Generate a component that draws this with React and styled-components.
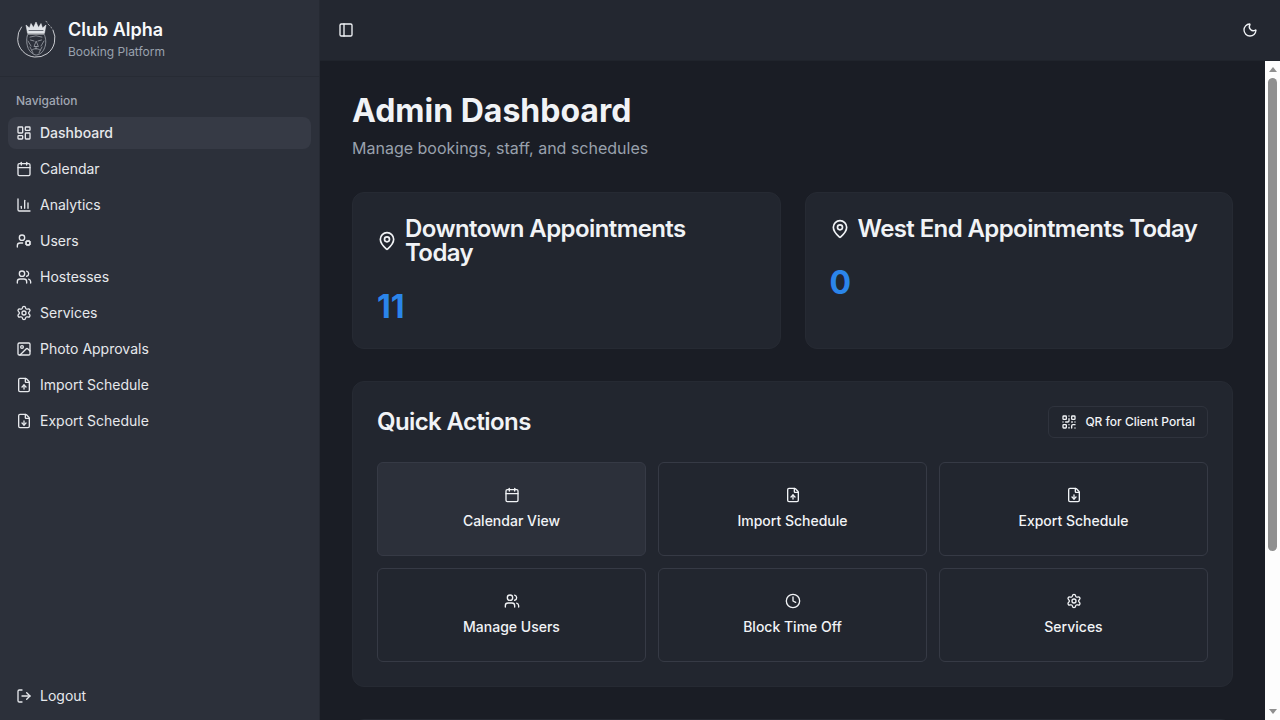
import React from 'react';
import styled, { createGlobalStyle } from 'styled-components';
import {
  LayoutDashboard, Calendar, ChartColumn, UserCog, Users, Settings, Image, FileUp, FileDown,
  LogOut, PanelLeft, Moon, MapPin, QrCode, Clock,
} from 'lucide-react';

const GlobalStyle = createGlobalStyle`
  html, body, #root { height: 100%; }
  body {
    margin: 0;
    background: #1a1d25;
    color: #f8fafc;
    font-family: Inter, "Noto Sans", sans-serif;
  }
  * { box-sizing: border-box; }
`;

const Layout = styled.div`
  display: flex;
  height: 100vh;
  overflow: hidden;
`;
const Sidebar = styled.aside`
  width: 320px;
  flex: none;
  display: flex;
  flex-direction: column;
  background: #2c303a;
  border-right: 1px solid #262a33;
`;
const Brand = styled.div`
  height: 77px;
  padding: 16px;
  display: flex;
  align-items: flex-start;
  gap: 12px;
  border-bottom: 1px solid #272b34;
`;
const BrandLogo = styled.svg`
  width: 40px;
  height: 42px;
  flex: none;
`;
const BrandName = styled.div`
  font-size: 18px;
  line-height: 28px;
  font-weight: 600;
  color: #f8fafc;
`;
const BrandSub = styled.div`
  font-size: 12px;
  line-height: 16px;
  color: #99a1ad;
`;
const Nav = styled.nav`
  flex: 1;
  padding: 16px 8px 8px;
  display: flex;
  flex-direction: column;
`;
const NavLabel = styled.div`
  height: 16px;
  margin: 0 8px 8px;
  font-size: 12px;
  line-height: 16px;
  font-weight: 500;
  color: #a1a7b3;
`;
const NavList = styled.div`
  display: flex;
  flex-direction: column;
  gap: 4px;
`;
const NavItem = styled.a`
  height: 32px;
  padding: 0 8px;
  display: flex;
  align-items: center;
  gap: 8px;
  border-radius: 8px;
  font-size: 14px;
  line-height: 20px;
  font-weight: ${p => (p.$active ? 500 : 400)};
  color: #e6e8ec;
  background: ${p => (p.$active ? '#363a45' : 'transparent')};
  svg { width: 16px; height: 16px; flex: none; }
`;
const SidebarFoot = styled.div`
  padding: 0 8px 8px;
`;
const Column = styled.div`
  flex: 1;
  min-width: 0;
  display: flex;
  flex-direction: column;
`;
const TopBar = styled.header`
  height: 61px;
  flex: none;
  padding: 0 16px 0 12px;
  display: flex;
  align-items: center;
  justify-content: space-between;
  background: #232730;
  border-bottom: 1px solid #20242c;
`;
const IconButton = styled.button`
  width: 28px;
  height: 28px;
  padding: 0;
  display: flex;
  align-items: center;
  justify-content: center;
  background: none;
  border: 0;
  color: #f1f3f6;
  svg { width: 16px; height: 16px; }
`;
const ScrollArea = styled.div`
  flex: 1;
  min-height: 0;
  display: flex;
`;
const Main = styled.main`
  flex: 1;
  min-width: 0;
  overflow: hidden;
  padding: 32px;
  display: flex;
  flex-direction: column;
  gap: 32px;
`;
const ScrollTrack = styled.div`
  width: 15px;
  flex: none;
  padding: 6px 3px;
  display: flex;
  flex-direction: column;
  align-items: center;
  background: #fdfdfd;
`;
const ScrollArrow = styled.div`
  flex: none;
  width: 0;
  height: 0;
  border-left: 4.5px solid transparent;
  border-right: 4.5px solid transparent;
  ${p => (p.$down ? 'border-top: 5px solid #8f8f8f;' : 'border-bottom: 5px solid #8f8f8f;')}
`;
const ScrollThumb = styled.div`
  flex: none;
  width: 9px;
  height: 473px;
  margin-top: 6px;
  margin-bottom: auto;
  border-radius: 5px;
  background: #8f8f8f;
`;
const PageHead = styled.div`
  display: flex;
  flex-direction: column;
  gap: 8px;
  flex: none;
`;
const PageTitle = styled.h1`
  margin: 0;
  font-size: 32px;
  line-height: 35px;
  font-weight: 700;
  color: #f1f3f6;
`;
const PageSub = styled.p`
  margin: 0;
  font-size: 16px;
  line-height: 24px;
  color: #99a1ad;
`;
const StatGrid = styled.div`
  display: grid;
  grid-template-columns: 1fr 1fr;
  gap: 24px;
  flex: none;
`;
const Card = styled.section`
  padding: 24px;
  background: #22262f;
  border: 1px solid #262a33;
  border-radius: 12px;
  flex: none;
`;
const StatTitle = styled.h3`
  margin: 0 0 24px;
  display: flex;
  align-items: center;
  gap: 8px;
  font-size: 24px;
  line-height: 24px;
  font-weight: 600;
  letter-spacing: -0.6px;
  color: #f1f3f6;
  svg { width: 20px; height: 20px; flex: none; }
`;
const StatValue = styled.div`
  font-size: 32px;
  line-height: 35px;
  font-weight: 700;
  color: #2b85ea;
`;
const ActionsHead = styled.div`
  height: 32px;
  margin-bottom: 24px;
  display: flex;
  align-items: center;
  justify-content: space-between;
`;
const ActionsTitle = styled.h2`
  margin: 0;
  font-size: 24px;
  line-height: 32px;
  font-weight: 600;
  letter-spacing: -0.6px;
  color: #f1f3f6;
`;
const OutlineButton = styled.button`
  height: 32px;
  padding: 0 12px;
  display: flex;
  align-items: center;
  gap: 8px;
  background: #22262f;
  border: 1px solid #2f333d;
  border-radius: 6px;
  font-family: inherit;
  font-size: 12px;
  line-height: 16px;
  font-weight: 500;
  color: #f1f3f6;
  svg { width: 16px; height: 16px; }
`;
const ActionGrid = styled.div`
  display: grid;
  grid-template-columns: repeat(3, 1fr);
  gap: 12px;
`;
const ActionTile = styled.button`
  height: 94px;
  padding: 0;
  display: flex;
  flex-direction: column;
  align-items: center;
  justify-content: center;
  gap: 8px;
  background: ${p => (p.$hover ? '#2c303a' : '#22262f')};
  border: 1px solid #363a45;
  border-radius: 6px;
  font-family: inherit;
  font-size: 14px;
  line-height: 20px;
  font-weight: 500;
  color: #f1f3f6;
  svg { width: 16px; height: 16px; }
`;
const MoreCard = styled(Card)`
  height: 180px;
`;

const navItems = [
  { label: 'Dashboard', icon: LayoutDashboard, active: true },
  { label: 'Calendar', icon: Calendar },
  { label: 'Analytics', icon: ChartColumn },
  { label: 'Users', icon: UserCog },
  { label: 'Hostesses', icon: Users },
  { label: 'Services', icon: Settings },
  { label: 'Photo Approvals', icon: Image },
  { label: 'Import Schedule', icon: FileUp },
  { label: 'Export Schedule', icon: FileDown },
];

const actions = [
  { label: 'Calendar View', icon: Calendar, hover: true },
  { label: 'Import Schedule', icon: FileUp },
  { label: 'Export Schedule', icon: FileDown },
  { label: 'Manage Users', icon: Users },
  { label: 'Block Time Off', icon: Clock },
  { label: 'Services', icon: Settings },
];

// rough line drawing of the lion head with crown
const Logo = () => (
  <BrandLogo viewBox="0 0 40 42" fill="none" stroke="#f1f3f6" strokeLinecap="round">
    <path d="M5.5 11 A18.7 18.7 0 1 0 37 14" strokeWidth="0.8" />
    <path d="M11.5 17 L10 9 L13.5 12 L15 7.5 L17.5 11.5 L20 6 L22.5 11.5 L25 7.5 L26.5 12 L30 9 L28.5 17 Z" fill="#dfe2e7" strokeWidth="0.5" />
    <path d="M13 14.5 H27" strokeWidth="0.7" stroke="#3a3e49" />
    <path d="M12 18 H28" strokeWidth="0.9" />
    <path d="M11.5 19 Q9.5 26 12.5 33 Q16 38.5 20 39 Q26 38.5 28.5 32 Q31 26 28.5 19" strokeWidth="0.7" stroke="#b9bdc6" strokeDasharray="2 0.8" />
    <path d="M14 21 Q20 18.5 26 21 M14.5 24 L18 25 M25.5 24 L22 25 M20 25.5 L18 30.5 H22 Z M16 34 Q20 31 24 34 M12 25 L15 30 M28 25 L25 30 M14 31 L17 37 M26 31 L23 37 M20 30.5 V33" strokeWidth="0.6" stroke="#c4c8cf" />
    <path d="M32 8 L33.5 9.5 M35 11 L35.5 12 M30 5.5 L31 6" strokeWidth="0.6" />
  </BrandLogo>
);

const App = () => (
  <Layout>
    <GlobalStyle />
    <Sidebar>
      <Brand>
        <Logo />
        <div>
          <BrandName>Club Alpha</BrandName>
          <BrandSub>Booking Platform</BrandSub>
        </div>
      </Brand>
      <Nav>
        <NavLabel>Navigation</NavLabel>
        <NavList>
          {navItems.map(({ label, icon: Icon, active }) => (
            <NavItem key={label} $active={active}><Icon />{label}</NavItem>
          ))}
        </NavList>
      </Nav>
      <SidebarFoot>
        <NavItem><LogOut />Logout</NavItem>
      </SidebarFoot>
    </Sidebar>
    <Column>
      <TopBar>
        <IconButton><PanelLeft /></IconButton>
        <IconButton><Moon /></IconButton>
      </TopBar>
      <ScrollArea>
        <Main>
          <PageHead>
            <PageTitle>Admin Dashboard</PageTitle>
            <PageSub>Manage bookings, staff, and schedules</PageSub>
          </PageHead>
          <StatGrid>
            <Card>
              <StatTitle><MapPin />Downtown Appointments Today</StatTitle>
              <StatValue>11</StatValue>
            </Card>
            <Card>
              <StatTitle><MapPin />West End Appointments Today</StatTitle>
              <StatValue>0</StatValue>
            </Card>
          </StatGrid>
          <Card>
            <ActionsHead>
              <ActionsTitle>Quick Actions</ActionsTitle>
              <OutlineButton><QrCode />QR for Client Portal</OutlineButton>
            </ActionsHead>
            <ActionGrid>
              {actions.map(({ label, icon: Icon, hover }) => (
                <ActionTile key={label} $hover={hover}><Icon />{label}</ActionTile>
              ))}
            </ActionGrid>
          </Card>
          <MoreCard />
        </Main>
        <ScrollTrack>
          <ScrollArrow />
          <ScrollThumb />
          <ScrollArrow $down />
        </ScrollTrack>
      </ScrollArea>
    </Column>
  </Layout>
);

export default App;
